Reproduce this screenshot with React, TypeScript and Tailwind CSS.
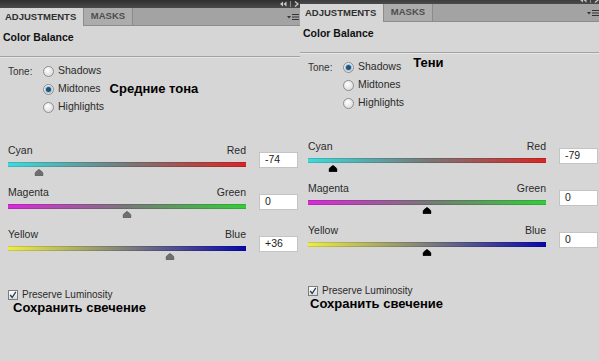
import React from "react";

type Slider = { left: string; right: string; value: number; grad: string };

const FONT = "font-['Liberation_Sans',Arial,sans-serif]";

function Thumb({ dark }: { dark: boolean }) {
  return (
    <svg width="9" height="7" viewBox="0 0 9 7" className="block">
      <path
        d="M4.5 0.5 C6 1.5 8.5 3 8.5 4.5 V6.5 H0.5 V4.5 C0.5 3 3 1.5 4.5 0.5Z"
        fill={dark ? "#000" : "#6f6f6f"}
        stroke={dark ? "#000" : "#5c5c5c"}
        strokeWidth="0.8"
      />
    </svg>
  );
}

function Radio({ checked }: { checked: boolean }) {
  return (
    <div className="w-[11px] h-[11px] rounded-full border border-[#8e8e8e] bg-[radial-gradient(circle_at_40%_35%,#ffffff,#d2d2d2)] flex items-center justify-center shrink-0">
      {checked && (
        <div className="w-[7px] h-[7px] rounded-full bg-[#9cc3dc] flex items-center justify-center">
          <div className="w-[5px] h-[5px] rounded-full bg-[#1f5478]" />
        </div>
      )}
    </div>
  );
}

function TopIcons() {
  return (
    <svg width="20" height="6" viewBox="0 0 20 6" className="block">
      <path d="M0 3 L3 0.5 V5.5Z" fill="#c9c9c9" />
      <path d="M3.5 3 L6.5 0.5 V5.5Z" fill="#c9c9c9" />
      <rect x="10" y="0" width="1" height="6" fill="#8a8a8a" />
      <path d="M15 0.5 L18 3 L15 5.5" stroke="#c9c9c9" strokeWidth="1.3" fill="none" />
    </svg>
  );
}

function MenuIcon() {
  return (
    <svg width="12" height="8" viewBox="0 0 12 8" className="block">
      <path d="M0 3 H4 L2 5.5Z" fill="#333" />
      <rect x="5" y="1" width="7" height="1" fill="#333" />
      <rect x="5" y="3.5" width="7" height="1" fill="#333" />
      <rect x="5" y="6" width="7" height="1" fill="#333" />
    </svg>
  );
}

function Panel({
  topH,
  tone,
  annotation,
  annGap,
  annLift,
  sliders,
  dark,
  saveIndent,
}: {
  topH: "full" | "half";
  tone: number;
  annotation: string;
  annGap: string;
  annLift: string;
  sliders: Slider[];
  dark: boolean;
  saveIndent: string;
}) {
  const tones = ["Shadows", "Midtones", "Highlights"];
  return (
    <div className={`w-[300px] h-full bg-[#d6d6d6] flex flex-col shrink-0 ${FONT} text-[#1e1e1e]`}>
      <div className={`${topH === "full" ? "h-[8px]" : "h-[4px]"} overflow-hidden flex flex-col justify-end bg-[#3c3c3c]`}>
        <div className="h-[8px] shrink-0 bg-[linear-gradient(to_bottom,#2f2f2f,#4a4a4a)] flex items-center justify-end">
          <TopIcons />
        </div>
      </div>
      <div className="h-[18px] flex bg-[#a3a3a3]">
        <div className="w-[83px] bg-[#d6d6d6] flex items-center pl-[5px] text-[9.5px] font-bold text-[#303030]">
          ADJUSTMENTS
        </div>
        <div className="w-[50px] bg-[#acacac] border-x border-b border-[#8c8c8c] flex items-center justify-center text-[9.5px] font-bold text-[#4e4e4e]">
          MASKS
        </div>
        <div className="flex-1 border-b border-[#8c8c8c] flex items-center justify-end pr-[1px]">
          <MenuIcon />
        </div>
      </div>
      <div className="h-[24px] flex items-center pl-[3px] text-[10.5px] font-bold text-[#111]">Color Balance</div>
      <div className="mt-[6px] h-px bg-[#a2a2a2]" />
      <div className="h-px bg-[#e6e6e6]" />
      <div className="flex pl-[8px] pt-[4px]">
        <div className="w-[35px] h-[18px] flex items-center text-[10px] text-[#333]">Tone:</div>
        <div className="flex flex-col">
          {tones.map((t, i) => (
            <div key={t} className="h-[18px] flex items-center">
              <Radio checked={i === tone} />
              <span className="ml-[4px] text-[10.5px] text-[#2a2a2a]">{t}</span>
              {i === tone && (
                <span className={`${annGap} ${annLift} text-[13px] font-bold text-black`}>{annotation}</span>
              )}
            </div>
          ))}
        </div>
      </div>
      <div className="mt-[28px] flex flex-col">
        {sliders.map((s) => (
          <div key={s.left} className="h-[42px] flex pl-[8px]">
            <div className="w-[238px] flex flex-col">
              <div className="h-[14px] flex justify-between items-center text-[10.5px] text-[#2a2a2a]">
                <span>{s.left}</span>
                <span>{s.right}</span>
              </div>
              <div className={`mt-[4px] h-[5px] relative border-y border-[#00000022] ${s.grad}`}>
                <div
                  className="absolute top-[6px] -translate-x-1/2"
                  style={{ left: `${((s.value + 100) / 200) * 100}%` }}
                >
                  <Thumb dark={dark} />
                </div>
              </div>
            </div>
            <div className="ml-[13px] mt-[8px] w-[39px] h-[16px] bg-white border border-[#c4c4c4] flex items-center pl-[5px] text-[10.5px] text-[#222]">
              {s.value > 0 ? `+${s.value}` : `${s.value}`}
            </div>
          </div>
        ))}
      </div>
      <div className="mt-[19px] h-[12px] flex items-center pl-[8px]">
        <div className="w-[10px] h-[10px] border border-[#7c7c7c] bg-[linear-gradient(to_bottom,#ffffff,#dcdcdc)] flex items-center justify-center">
          <svg width="8" height="8" viewBox="0 0 8 8" className="block">
            <path d="M1.2 4 L3.2 6.5 L6.8 0.8" stroke="#2b3a55" strokeWidth="1.3" fill="none" />
          </svg>
        </div>
        <span className="ml-[4px] text-[10px] leading-[12px] text-[#2a2a2a]">Preserve Luminosity</span>
      </div>
      <div className={`h-[13px] leading-[13px] ${saveIndent} text-[13px] font-bold text-black`}>
        Сохранить свечение
      </div>
    </div>
  );
}

const CR = "bg-[linear-gradient(to_right,#3edadd,#787878,#d82626)]";
const MG = "bg-[linear-gradient(to_right,#d82ad8,#787878,#36cc3a)]";
const YB = "bg-[linear-gradient(to_right,#ecec4a,#7e7e7e,#0808aa)]";

export default function App() {
  return (
    <div className="w-[599px] h-[361px] overflow-hidden flex bg-[#d6d6d6]">
      <Panel
        topH="full"
        tone={1}
        annotation="Средние тона"
        annGap="ml-[9px]"
        annLift="mb-[1px]"
        dark={false}
        saveIndent="pl-[13px]"
        sliders={[
          { left: "Cyan", right: "Red", value: -74, grad: CR },
          { left: "Magenta", right: "Green", value: 0, grad: MG },
          { left: "Yellow", right: "Blue", value: 36, grad: YB },
        ]}
      />
      <Panel
        topH="half"
        tone={0}
        annotation="Тени"
        annGap="ml-[12px]"
        annLift="mb-[8px]"
        dark={true}
        saveIndent="pl-[10px]"
        sliders={[
          { left: "Cyan", right: "Red", value: -79, grad: CR },
          { left: "Magenta", right: "Green", value: 0, grad: MG },
          { left: "Yellow", right: "Blue", value: 0, grad: YB },
        ]}
      />
    </div>
  );
}
